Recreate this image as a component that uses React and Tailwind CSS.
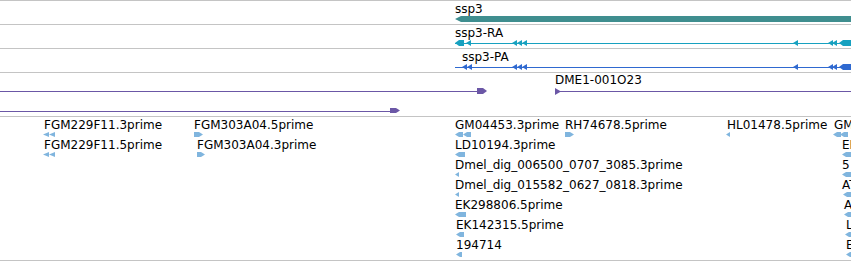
import React from "react";

const FONT = "font-['DejaVu_Sans',sans-serif]";

function Sep() {
  return <div className="h-px w-full bg-[#c4c4c4]" />;
}

function Label({ x, y, children }) {
  return (
    <div
      className={`absolute whitespace-nowrap text-[12px] leading-[14px] text-black ${FONT}`}
      style={{ left: x, top: y }}
    >
      {children}
    </div>
  );
}

// left-pointing arrowhead
function LA({ x, y, w = 5, h = 6, fill }) {
  return <polygon points={`${x},${y + h / 2} ${x + w},${y} ${x + w},${y + h}`} fill={fill} />;
}
// left block: tip then rect
function LB({ x, x2, y, h = 6, tip = 4, fill }) {
  return (
    <polygon
      points={`${x},${y + h / 2} ${x + tip},${y} ${x2},${y} ${x2},${y + h} ${x + tip},${y + h}`}
      fill={fill}
    />
  );
}
// right block: rect then tip
function RB({ x, x2, y, h = 6, tip = 4, fill }) {
  return (
    <polygon
      points={`${x},${y} ${x2 - tip},${y} ${x2},${y + h / 2} ${x2 - tip},${y + h} ${x},${y + h}`}
      fill={fill}
    />
  );
}

function Track({ h, children }) {
  return (
    <div className="relative w-full" style={{ height: h }}>
      {children}
    </div>
  );
}

const CYAN = "#17a1c0";
const BLUE = "#2f69d0";
const PURPLE = "#6b57a6";
const TEAL = "#3f8e8f";
const LB_C = "#80b5de";

function Transcript({ color, first }) {
  return (
    <svg className="absolute left-0 top-0" width="851" height="23">
      <rect x="455" y="18" width="396" height="1" fill={color} />
      {first === "RA" ? (
        <>
          <LB x={455} x2={464} y={15} fill={color} />
          <LA x={466} y={15} fill={color} />
        </>
      ) : (
        <>
          <LA x={462} y={15} fill={color} />
          <LA x={467} y={15} fill={color} />
        </>
      )}
      <LA x={512} y={15} fill={color} />
      <LA x={517} y={15} fill={color} />
      <LA x={522} y={15} fill={color} />
      <LA x={793} y={15} fill={color} />
      <LA x={828} y={15} fill={color} />
      <LA x={832} y={15} fill={color} />
      <LB x={839} x2={851} y={15} fill={color} />
    </svg>
  );
}

const rows = [
  [
    ["FGM229F11.3prime", 44],
    ["FGM303A04.5prime", 194],
    ["GM04453.3prime", 455],
    ["RH74678.5prime", 565],
    ["HL01478.5prime", 727],
    ["GM13257.3prime", 834],
  ],
  [
    ["FGM229F11.5prime", 44],
    ["FGM303A04.3prime", 197],
    ["LD10194.3prime", 455],
    ["EK125432.5prime", 842],
  ],
  [
    ["Dmel_dig_006500_0707_3085.3prime", 455],
    ["5", 842],
  ],
  [
    ["Dmel_dig_015582_0627_0818.3prime", 455],
    ["AT08990.5prime", 842],
  ],
  [
    ["EK298806.5prime", 455],
    ["AY118524", 844],
  ],
  [
    ["EK142315.5prime", 456],
    ["LD21712.5prime", 846],
  ],
  [
    ["194714", 456],
    ["EC312155.5prime", 846],
  ],
];

export default function App() {
  return (
    <div className="w-[851px] h-[261px] overflow-hidden bg-white flex flex-col">
      <Sep />
      <Track h={23}>
        <Label x={455} y={1}>ssp3</Label>
        <svg className="absolute left-0 top-0" width="851" height="23">
          <polygon points="455,18 461,15 851,15 851,21 461,21" fill={TEAL} />
        </svg>
      </Track>
      <Sep />
      <Track h={23}>
        <Label x={455} y={1}>ssp3-RA</Label>
        <Transcript color={CYAN} first="RA" />
      </Track>
      <Sep />
      <Track h={23}>
        <Label x={462} y={1}>ssp3-PA</Label>
        <Transcript color={BLUE} first="PA" />
      </Track>
      <Sep />
      <Track h={43}>
        <Label x={555} y={0}>DME1-001O23</Label>
        <svg className="absolute left-0 top-0" width="851" height="43">
          <rect x="0" y="18" width="478" height="1" fill={PURPLE} />
          <RB x={477} x2={487} y={15} fill={PURPLE} />
          <rect x="555" y="18" width="296" height="1" fill={PURPLE} />
          <polygon points="555,15 561,18.5 555,22" fill={PURPLE} />
          <rect x="0" y="38" width="391" height="1" fill={PURPLE} />
          <RB x={390} x2={400} y={35} h={5} fill={PURPLE} />
        </svg>
      </Track>
      <Sep />
      <Track h={143}>
        {rows.map((r, i) =>
          r.map(([t, x]) => (
            <Label key={t + i} x={x} y={1 + 20 * i}>
              {t}
            </Label>
          ))
        )}
        <svg className="absolute left-0 top-0" width="851" height="143">
          {/* row 0 */}
          <LA x={43} y={15} w={6} h={5} fill={LB_C} />
          <LA x={49} y={15} w={6} h={5} fill={LB_C} />
          <RB x={194} x2={203} y={15} h={5} fill={LB_C} />
          <LB x={455} x2={463} y={15} h={5} fill={LB_C} />
          <LB x={463} x2={471} y={15} h={5} fill={LB_C} />
          <RB x={565} x2={574} y={15} h={5} fill={LB_C} />
          <LA x={726} y={15} w={4} h={5} fill={LB_C} />
          <LB x={833} x2={841} y={15} h={5} fill={LB_C} />
          <LB x={840} x2={848} y={15} h={5} fill={LB_C} />
          {/* row 1 */}
          <LA x={43} y={35} w={6} h={5} fill={LB_C} />
          <LA x={49} y={35} w={6} h={5} fill={LB_C} />
          <RB x={197} x2={205} y={35} h={5} fill={LB_C} />
          <LB x={455} x2={465} y={35} h={5} fill={LB_C} />
          <LB x={842} x2={851} y={35} h={5} fill={LB_C} />
          {/* row 2 */}
          <LA x={455} y={55} w={4} h={5} fill={LB_C} />
          <LB x={842} x2={851} y={55} h={5} fill={LB_C} />
          {/* row 3 */}
          <LA x={455} y={75} w={4} h={5} fill={LB_C} />
          <LB x={843} x2={851} y={75} h={5} fill={LB_C} />
          {/* row 4 */}
          <LB x={455} x2={466} y={95} h={5} fill={LB_C} />
          <LB x={844} x2={851} y={95} h={5} fill={LB_C} />
          {/* row 5 */}
          <LB x={456} x2={464} y={115} h={5} fill={LB_C} />
          <LB x={845} x2={851} y={115} h={5} fill={LB_C} />
          {/* row 6 */}
          <LB x={456} x2={462} y={135} h={5} fill={LB_C} />
          <LB x={846} x2={851} y={135} h={5} fill={LB_C} />
        </svg>
      </Track>
      <Sep />
    </div>
  );
}
